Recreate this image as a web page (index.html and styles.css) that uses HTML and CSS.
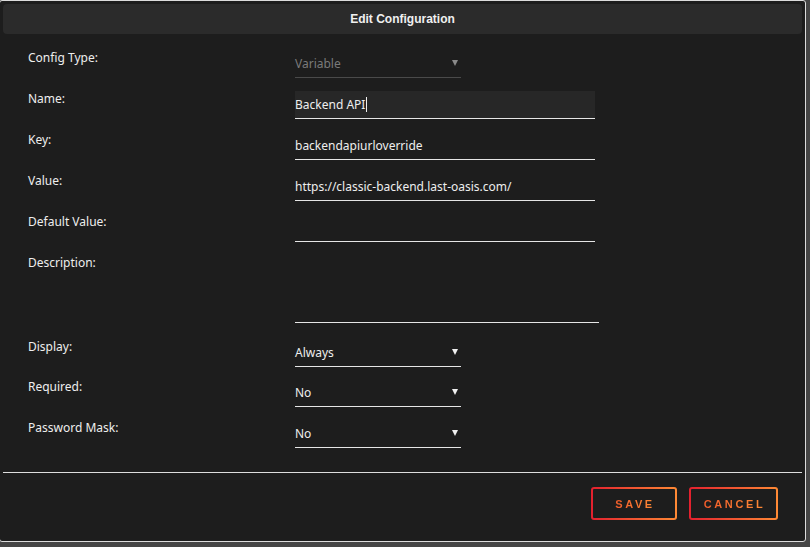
FILE: index.html
```html
<!DOCTYPE html>
<html>
<head>
<meta charset="utf-8">
<link rel="stylesheet" href="styles.css">
</head>
<body>
<div class="dialog">
  <div class="header">Edit Configuration</div>
  <div class="form">
    <div class="row">
      <div class="label">Config Type:</div>
      <div class="field select disabled"><span>Variable</span><i class="arrow"></i></div>
    </div>
    <div class="row">
      <div class="label">Name:</div>
      <div class="field text focused"><span>Backend API</span><b class="caret"></b></div>
    </div>
    <div class="row">
      <div class="label">Key:</div>
      <div class="field text"><span>backendapiurloverride</span></div>
    </div>
    <div class="row">
      <div class="label">Value:</div>
      <div class="field text"><span>https://classic-backend.last-oasis.com/</span></div>
    </div>
    <div class="row">
      <div class="label">Default Value:</div>
      <div class="field text"></div>
    </div>
    <div class="row desc">
      <div class="label">Description:</div>
      <div class="field area"></div>
    </div>
    <div class="row">
      <div class="label">Display:</div>
      <div class="field select"><span>Always</span><i class="arrow"></i></div>
    </div>
    <div class="row tight">
      <div class="label">Required:</div>
      <div class="field select"><span>No</span><i class="arrow"></i></div>
    </div>
    <div class="row">
      <div class="label">Password Mask:</div>
      <div class="field select"><span>No</span><i class="arrow"></i></div>
    </div>
  </div>
  <div class="divider"></div>
  <div class="footer">
    <button class="btn save"><span>SAVE</span></button>
    <button class="btn cancel"><span>CANCEL</span></button>
  </div>
</div>
</body>
</html>
```

FILE: styles.css
```css
* { box-sizing: border-box; }
html, body { margin: 0; padding: 0; }
body {
  background: #454545;
  width: 810px;
  height: 547px;
  overflow: hidden;
  font-family: "Noto Sans", "Liberation Sans", sans-serif;
  color: #ececec;
}
.dialog {
  width: 807px;
  height: 542px;
  margin-left: -1px;
  border: 1px solid #dcdcdc;
  border-radius: 3px;
  background: #1d1d1d;
  padding: 3px;
  display: flex;
  flex-direction: column;
}
.header {
  height: 30px;
  border-radius: 4px;
  background: #2b2b2b;
  text-align: center;
  line-height: 30px;
  font-family: "Liberation Sans", Arial, sans-serif;
  font-weight: bold;
  font-size: 12px;
  color: #f0f0f0;
}
.form {
  padding: 16px 0 0 25px;
  display: flex;
  flex-direction: column;
  gap: 13px;
}
.row {
  display: grid;
  grid-template-columns: 267px 1fr;
  align-items: start;
}
.row.desc { margin-bottom: 3px; }
.row.tight { margin-top: -1px; }
.label {
  font-size: 12px;
  line-height: 16px;
  color: #eeeeee;
}
.field {
  height: 28px;
  line-height: 27px;
  font-size: 12px;
  color: #eeeeee;
  border-bottom: 1px solid #e6e6e6;
  display: flex;
  align-items: center;
}
.field.text { width: 300px; }
.field.focused { background: #272727; }
.field.area { width: 304px; height: 68px; }
.field.select {
  width: 166px;
  justify-content: space-between;
  padding-right: 3px;
}
.field.disabled { color: #7a7a7a; border-bottom-color: #4a4a4a; }
.caret {
  display: inline-block;
  width: 1px;
  height: 15px;
  background: #f0f0f0;
  margin-left: 1px;
}
.arrow {
  display: block;
  width: 0;
  height: 0;
  border-left: 3px solid transparent;
  border-right: 3px solid transparent;
  border-top: 6px solid #f0f0f0;
  margin-top: -2px;
}
.disabled .arrow { border-top-color: #8a8a8a; }
.divider {
  height: 1px;
  background: #dedede;
  margin-top: 24px;
}
.footer {
  display: flex;
  justify-content: flex-end;
  gap: 12px;
  padding: 14px 24px 0 0;
}
.btn {
  height: 33px;
  border: 2px solid transparent;
  border-radius: 3px;
  background:
    linear-gradient(#1d1d1d, #1d1d1d) padding-box,
    linear-gradient(90deg, #e3202e, #ff8a35) border-box;
  font-family: "Liberation Sans", Arial, sans-serif;
  font-weight: bold;
  font-size: 11px;
  letter-spacing: 2.6px;
  padding: 0;
  cursor: pointer;
}
.btn span {
  background: linear-gradient(90deg, #f05a2a, #ff8a35);
  -webkit-background-clip: text;
  background-clip: text;
  color: transparent;
  padding-left: 2px;
}
.save { width: 86px; }
.cancel { width: 89px; }
```
